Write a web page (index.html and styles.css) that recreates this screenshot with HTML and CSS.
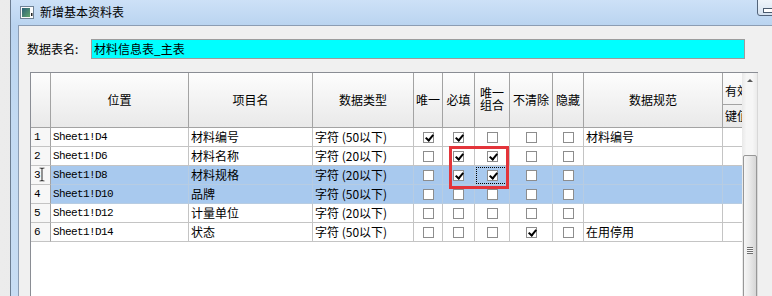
FILE: index.html
```html
<!DOCTYPE html>
<html lang="zh-CN">

<head>
	<meta charset="UTF-8">
	<title>新增基本资料表</title>
	<link rel="stylesheet" href="styles.css">
</head>

<body>
	<div class="window">
		<div class="titlebar">
			<svg class="app-icon" width="14" height="13" viewBox="0 0 14 13">
				<defs>
					<linearGradient id="pic" x1="0" y1="0" x2="1" y2="1">
						<stop offset="0" stop-color="#2b5f78" />
						<stop offset="1" stop-color="#62a66c" />
					</linearGradient>
				</defs>
				<rect x="0.5" y="0.5" width="13" height="12" fill="#fbfbfb" stroke="#6f8296" />
				<rect x="2" y="2" width="8" height="9" fill="url(#pic)" />
				<rect x="11" y="7" width="1.5" height="3" fill="#222" />
			</svg>
			<span class="title">新增基本资料表</span>
			<span class="min-btn"></span>
		</div>

		<div class="client">
			<div class="name-row">
				<label class="name-label">数据表名:</label>
				<div class="name-input">材料信息表_主表</div>
			</div>

			<div class="grid-wrap">
				<div class="grid-area">
					<div class="grid">
						<!-- header -->
						<div class="hd"></div>
						<div class="hd">位置</div>
						<div class="hd">项目名</div>
						<div class="hd">数据类型</div>
						<div class="hd">唯一</div>
						<div class="hd">必填</div>
						<div class="hd two-line">唯一<br>组合</div>
						<div class="hd">不清除</div>
						<div class="hd">隐藏</div>
						<div class="hd">数据规范</div>
						<div class="hd split">
							<div class="split-top">有效性</div>
							<div class="split-bottom">键值</div>
						</div>

						<!-- row 1 -->
						<div class="rn">1</div>
						<div class="c mono">Sheet1!D4</div>
						<div class="c">材料编号</div>
						<div class="c">字符 (50以下)</div>
						<div class="c ck"><span class="cb on"></span></div>
						<div class="c ck"><span class="cb on"></span></div>
						<div class="c ck"><span class="cb"></span></div>
						<div class="c ck"><span class="cb"></span></div>
						<div class="c ck"><span class="cb"></span></div>
						<div class="c">材料编号</div>
						<div class="c"></div>

						<!-- row 2 -->
						<div class="rn">2</div>
						<div class="c mono">Sheet1!D6</div>
						<div class="c">材料名称</div>
						<div class="c">字符 (20以下)</div>
						<div class="c ck"><span class="cb"></span></div>
						<div class="c ck"><span class="cb on"></span></div>
						<div class="c ck"><span class="cb on"></span></div>
						<div class="c ck"><span class="cb"></span></div>
						<div class="c ck"><span class="cb"></span></div>
						<div class="c"></div>
						<div class="c"></div>

						<!-- row 3 (selected) -->
						<div class="rn">3</div>
						<div class="c sel mono">Sheet1!D8</div>
						<div class="c sel">材料规格</div>
						<div class="c sel">字符 (20以下)</div>
						<div class="c sel ck"><span class="cb"></span></div>
						<div class="c sel ck"><span class="cb on"></span></div>
						<div class="c sel ck focus"><span class="cb on"></span></div>
						<div class="c sel ck"><span class="cb"></span></div>
						<div class="c sel ck"><span class="cb"></span></div>
						<div class="c sel"></div>
						<div class="c sel"></div>

						<!-- row 4 (selected) -->
						<div class="rn">4</div>
						<div class="c sel mono">Sheet1!D10</div>
						<div class="c sel">品牌</div>
						<div class="c sel">字符 (50以下)</div>
						<div class="c sel ck"><span class="cb"></span></div>
						<div class="c sel ck"><span class="cb"></span></div>
						<div class="c sel ck"><span class="cb"></span></div>
						<div class="c sel ck"><span class="cb"></span></div>
						<div class="c sel ck"><span class="cb"></span></div>
						<div class="c sel"></div>
						<div class="c sel"></div>

						<!-- row 5 -->
						<div class="rn">5</div>
						<div class="c mono">Sheet1!D12</div>
						<div class="c">计量单位</div>
						<div class="c">字符 (20以下)</div>
						<div class="c ck"><span class="cb"></span></div>
						<div class="c ck"><span class="cb"></span></div>
						<div class="c ck"><span class="cb"></span></div>
						<div class="c ck"><span class="cb"></span></div>
						<div class="c ck"><span class="cb"></span></div>
						<div class="c"></div>
						<div class="c"></div>

						<!-- row 6 -->
						<div class="rn">6</div>
						<div class="c mono">Sheet1!D14</div>
						<div class="c">状态</div>
						<div class="c">字符 (50以下)</div>
						<div class="c ck"><span class="cb"></span></div>
						<div class="c ck"><span class="cb"></span></div>
						<div class="c ck"><span class="cb"></span></div>
						<div class="c ck"><span class="cb on"></span></div>
						<div class="c ck"><span class="cb"></span></div>
						<div class="c">在用停用</div>
						<div class="c"></div>
					</div>
				</div>

				<div class="vscroll">
					<span class="arrow-up"></span>
					<div class="thumb">
						<span class="grip"></span>
					</div>
				</div>

				<!-- annotation and mouse cursor drawn over the grid -->
				<div class="mark"></div>
				<svg class="ibeam" width="6" height="15" viewBox="0 0 6 15">
					<path d="M0.5 0.5h2l0.5 0.5l0.5-0.5h2v1.3h-1.8v11.4h1.8v1.3h-2l-0.5-0.5l-0.5 0.5h-2v-1.3h1.8v-11.4h-1.8z" fill="#000" stroke="#fff" stroke-width="0.5" />
				</svg>
			</div>
		</div>
	</div>
</body>

</html>
```

FILE: styles.css
```css
/* window chrome */
* {
	box-sizing: border-box;
}

body {
	margin: 0;
	width: 772px;
	height: 296px;
	overflow: hidden;
	background: linear-gradient(to right, #ececec, #d2d2d2);
	font-family: "Noto Sans CJK SC", sans-serif;
	font-size: 12px;
	color: #000;
}

.window {
	margin-left: 10px;
	height: 296px;
	border-left: 1px solid #6c7d91;
	background: linear-gradient(#cde1f7, #bad4f0 25px, #c3daf2 120px, #c8ddf3);
}

.titlebar {
	position: relative;
	height: 25px;
	display: flex;
	align-items: center;
	padding-left: 9px;
}

.app-icon {
	display: block;
	margin-top: -1px;
}

.title {
	margin-left: 6px;
	font-size: 12px;
	line-height: 14px;
	margin-top: -1px;
}

.min-btn {
	position: absolute;
	left: 746px;
	top: -4px;
	width: 34px;
	height: 20px;
	border: 1px solid #53647a;
	border-radius: 3px;
	background: linear-gradient(#f4f8fc, #d5e2f0);
}

.min-btn::after {
	content: "";
	position: absolute;
	left: 5px;
	top: 11px;
	width: 12px;
	height: 3px;
	border: 1px solid #4a5a6e;
	background: #fff;
}

/* client area */
.client {
	margin-left: 7px;
	height: 271px;
	border-left: 1px solid #8c9db3;
	border-top: 1px solid #8c9db3;
	background: #f0f0f0;
	padding-top: 13px;
	overflow: hidden;
}

.name-row {
	display: flex;
	align-items: center;
	height: 20px;
	padding-left: 8px;
}

.name-label {
	width: 64px;
	line-height: 14px;
}

.name-input {
	width: 654px;
	height: 20px;
	border: 1px solid #9c9c9c;
	background: #00ffff;
	padding-left: 2px;
	line-height: 17px;
}

/* grid */
.grid-wrap {
	position: relative;
	display: flex;
	margin: 13px 0 0 11px;
	width: 728px;
	height: 224px;
	border-top: 1px solid #8a8d94;
	border-left: 1px solid #8a8d94;
}

.grid-area {
	width: 711px;
	overflow: hidden;
	background: #fff;
}

.grid {
	display: grid;
	grid-template-columns: 20px 138px 124px 101px 29px 32px 35px 43px 31px 139px 60px;
	grid-template-rows: 55px repeat(6, 19px);
	width: 752px;
}

.hd {
	display: flex;
	align-items: center;
	justify-content: center;
	border-right: 1px solid #a3a3a3;
	border-bottom: 1px solid #a3a3a3;
	background: linear-gradient(#fdfdfd, #f1f1f1 60%, #e9e9e9);
	white-space: nowrap;
	line-height: 14px;
}

.two-line {
	line-height: 12px;
	text-align: center;
	padding-bottom: 2px;
}

.split {
	display: block;
	overflow: hidden;
}

.split-top {
	height: 32px;
	padding: 11px 0 0 2px;
	border-bottom: 1px solid #a3a3a3;
}

.split-bottom {
	padding: 4px 0 0 2px;
}

.rn {
	display: flex;
	align-items: center;
	padding-left: 3px;
	border-right: 1px solid #a3a3a3;
	border-bottom: 1px solid #c4c4c4;
	background: #f7f7f7;
	font-family: "Liberation Mono", monospace;
	font-size: 11px;
}

.c {
	display: flex;
	align-items: center;
	padding-left: 2px;
	border-right: 1px solid #c4c4c4;
	border-bottom: 1px solid #c4c4c4;
	white-space: nowrap;
	overflow: hidden;
	line-height: 14px;
}

.mono {
	font-family: "Liberation Mono", monospace;
	font-size: 11px;
	letter-spacing: -0.6px;
}

.sel {
	background: #a8c9ee;
	border-right-color: #b7cce2;
	border-bottom-color: #b7cce2;
}

.ck {
	justify-content: center;
	padding-left: 0;
}

.focus {
	outline: 1px dotted #000;
	outline-offset: -2px;
}

.cb {
	position: relative;
	display: block;
	width: 11px;
	height: 11px;
	border: 1px solid #8d8d8d;
	background: #fff;
}

.cb.on::after {
	content: "";
	position: absolute;
	left: 3px;
	top: 0;
	width: 3px;
	height: 6px;
	border: solid #000;
	border-width: 0 2px 2px 0;
	transform: rotate(40deg);
}

/* vertical scrollbar */
.vscroll {
	position: relative;
	width: 16px;
	border-right: 1px solid #d8d8d8;
	background: linear-gradient(to right, #e9e9e9, #f6f6f6 30%, #f6f6f6 70%, #ebebeb);
}

.arrow-up {
	position: absolute;
	left: 5px;
	top: 6px;
	width: 0;
	height: 0;
	border-left: 3px solid transparent;
	border-right: 3px solid transparent;
	border-bottom: 3px solid #5a5a5a;
}

.thumb {
	position: absolute;
	left: 1px;
	top: 82px;
	width: 14px;
	height: 160px;
	border: 1px solid #979797;
	border-radius: 2px;
	background: linear-gradient(to right, #f6f6f6, #e8e8e8 50%, #d6d6d6);
}

.grip {
	position: absolute;
	left: 3px;
	top: 91px;
	width: 6px;
	height: 7px;
	background: repeating-linear-gradient(#6e6e6e 0 1px, #f8f8f8 1px 2px);
}

/* red annotation box */
.mark {
	position: absolute;
	left: 418px;
	top: 73px;
	width: 60px;
	height: 43px;
	border: 3px solid #e3343a;
}

.ibeam {
	position: absolute;
	left: 8px;
	top: 94px;
}
```
